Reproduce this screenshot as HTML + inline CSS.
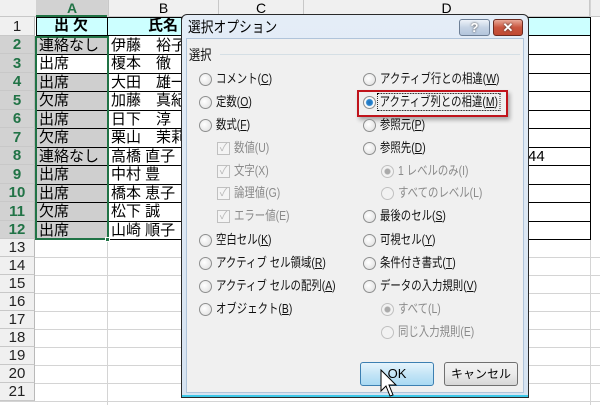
<!DOCTYPE html>
<html><head><meta charset="utf-8"><style>
*{margin:0;padding:0;box-sizing:border-box}
body{width:600px;height:405px;overflow:hidden;background:#fff;position:relative;font-family:"Liberation Sans","Noto Sans CJK JP",sans-serif}
.a{position:absolute}
.hl{position:absolute;left:0;width:600px;height:1px;background:#d4d4d4}
.vl{position:absolute;top:0;height:405px;width:1px;background:#d4d4d4}
.rh{position:absolute;left:0;width:35px;background:#f0f0f0;border-bottom:1px solid #c8c8c8;border-right:1px solid #b9b9b9;font-size:15px;text-align:center;color:#222}
.rh.s{background:#d2d2d2;color:#217346;font-weight:bold}
.c{position:absolute;font-size:15px;line-height:18px;color:#000;white-space:nowrap}
.t{position:absolute;font-size:13px;color:#111;white-space:nowrap;line-height:16px;transform:scaleX(0.8);transform-origin:0 0}
.t.g{color:#8a8a8a}
.r{position:absolute;width:13px;height:13px;border-radius:50%;border:1px solid #8e8f8f;background:radial-gradient(circle at 40% 40%,#fff,#dcdcdc)}
.r.g{border-color:#c0c0c0;background:#f2f2f2}
.k{position:absolute;width:13px;height:13px;border:1px solid #c0c0c0;background:#f4f4f4;color:#b8b8b8;font-size:11px;line-height:11px;text-align:center}
u{text-decoration:underline}
</style></head><body>
<div class="a" style="left:0;top:0;width:600px;height:17px;background:#f0f0f0;border-bottom:1px solid #c8c8c8"></div>
<div class="a" style="left:36px;top:0;width:72px;height:17px;background:#d2d2d2;border-bottom:2px solid #217346;color:#217346;font-size:14px;text-align:center;font-weight:bold">A</div>
<div class="a" style="left:108px;top:0;width:110px;height:17px;font-size:14px;text-align:center;border-left:1px solid #c8c8c8">B</div>
<div class="a" style="left:218px;top:0;width:85px;height:17px;font-size:14px;text-align:center;border-left:1px solid #c8c8c8">C</div>
<div class="a" style="left:303px;top:0;width:287px;height:17px;font-size:14px;text-align:center;border-left:1px solid #c8c8c8;border-right:1px solid #c8c8c8">D</div>
<div class="vl" style="left:107px"></div><div class="vl" style="left:590px"></div>
<div class="hl" style="top:257px"></div><div class="hl" style="top:275px"></div><div class="hl" style="top:293px"></div><div class="hl" style="top:311px"></div><div class="hl" style="top:329px"></div><div class="hl" style="top:347px"></div><div class="hl" style="top:365px"></div><div class="hl" style="top:383px"></div><div class="hl" style="top:401px"></div>
<div class="rh" style="top:17px;height:19px;line-height:19px">1</div>
<div class="rh s" style="top:36px;height:18px;line-height:18px">2</div>
<div class="rh s" style="top:54px;height:19px;line-height:19px">3</div>
<div class="rh s" style="top:73px;height:18px;line-height:18px">4</div>
<div class="rh s" style="top:91px;height:19px;line-height:19px">5</div>
<div class="rh s" style="top:110px;height:18px;line-height:18px">6</div>
<div class="rh s" style="top:128px;height:19px;line-height:19px">7</div>
<div class="rh s" style="top:147px;height:18px;line-height:18px">8</div>
<div class="rh s" style="top:165px;height:19px;line-height:19px">9</div>
<div class="rh s" style="top:184px;height:18px;line-height:18px">10</div>
<div class="rh s" style="top:202px;height:19px;line-height:19px">11</div>
<div class="rh s" style="top:221px;height:18px;line-height:18px">12</div>
<div class="rh" style="top:239px;height:18px;line-height:18px">13</div>
<div class="rh" style="top:257px;height:18px;line-height:18px">14</div>
<div class="rh" style="top:275px;height:18px;line-height:18px">15</div>
<div class="rh" style="top:293px;height:18px;line-height:18px">16</div>
<div class="rh" style="top:311px;height:18px;line-height:18px">17</div>
<div class="rh" style="top:329px;height:18px;line-height:18px">18</div>
<div class="rh" style="top:347px;height:18px;line-height:18px">19</div>
<div class="rh" style="top:365px;height:18px;line-height:18px">20</div>
<div class="rh" style="top:383px;height:18px;line-height:18px">21</div>
<div class="a" style="left:36px;top:17px;width:555px;height:19px;background:#ccffff;border:1px solid #000"></div>
<div class="a" style="left:36px;top:36px;width:72px;height:203px;background:#cfcfcf"></div>
<div class="a" style="left:36px;top:54px;width:72px;height:19px;background:#fff"></div>
<div class="a" style="left:107px;top:17px;width:1px;height:222px;background:#000"></div>
<div class="a" style="left:181px;top:17px;width:1px;height:222px;background:#000"></div>
<div class="a" style="left:590px;top:17px;width:1px;height:222px;background:#000"></div>
<div class="a" style="left:36px;top:54px;width:555px;height:1px;background:#000"></div>
<div class="a" style="left:36px;top:73px;width:555px;height:1px;background:#000"></div>
<div class="a" style="left:36px;top:91px;width:555px;height:1px;background:#000"></div>
<div class="a" style="left:36px;top:110px;width:555px;height:1px;background:#000"></div>
<div class="a" style="left:36px;top:128px;width:555px;height:1px;background:#000"></div>
<div class="a" style="left:36px;top:147px;width:555px;height:1px;background:#000"></div>
<div class="a" style="left:36px;top:165px;width:555px;height:1px;background:#000"></div>
<div class="a" style="left:36px;top:184px;width:555px;height:1px;background:#000"></div>
<div class="a" style="left:36px;top:202px;width:555px;height:1px;background:#000"></div>
<div class="a" style="left:36px;top:221px;width:555px;height:1px;background:#000"></div>
<div class="a" style="left:36px;top:239px;width:555px;height:1px;background:#000"></div>
<div class="a" style="left:35px;top:36px;width:74px;height:204px;border:2px solid #217346"></div>
<div class="a" style="left:105px;top:237px;width:5px;height:5px;background:#217346;border:1px solid #fff"></div>
<div class="c" style="left:54px;top:17px;font-weight:bold;letter-spacing:4px">出欠</div>
<div class="c" style="left:148px;top:17px;font-weight:bold">氏名</div>
<div class="c" style="left:39px;top:37px">連絡なし</div><div class="c" style="left:111px;top:37px">伊藤　裕子</div>
<div class="c" style="left:39px;top:55px">出席</div><div class="c" style="left:111px;top:55px">榎本　徹</div>
<div class="c" style="left:39px;top:74px">出席</div><div class="c" style="left:111px;top:74px">大田　雄一</div>
<div class="c" style="left:39px;top:92px">欠席</div><div class="c" style="left:111px;top:92px">加藤　真紀</div>
<div class="c" style="left:39px;top:111px">出席</div><div class="c" style="left:111px;top:111px">日下　淳</div>
<div class="c" style="left:39px;top:129px">欠席</div><div class="c" style="left:111px;top:129px">栗山　茉莉</div>
<div class="c" style="left:39px;top:148px">連絡なし</div><div class="c" style="left:111px;top:148px">高橋 直子</div>
<div class="c" style="left:39px;top:166px">出席</div><div class="c" style="left:111px;top:166px">中村 豊</div>
<div class="c" style="left:39px;top:185px">出席</div><div class="c" style="left:111px;top:185px">橋本 恵子</div>
<div class="c" style="left:39px;top:203px">欠席</div><div class="c" style="left:111px;top:203px">松下 誠</div>
<div class="c" style="left:39px;top:222px">出席</div><div class="c" style="left:111px;top:222px">山崎 順子</div>
<div class="c" style="left:513px;top:148px">市44</div>
<div class="a" style="left:181px;top:14px;width:348px;height:384px;border:1px solid #2a2a2a;border-radius:6px 6px 0 0;background:linear-gradient(#e4edf7,#d6e3f1);box-shadow:inset 0 -2px 0 #3cc8e8"></div>
<div class="t" style="left:188px;top:19px;font-size:15px;line-height:18px;color:#000;transform:scaleX(0.85)">選択オプション</div>
<div class="a" style="left:459px;top:19px;width:31px;height:17px;border:1px solid #6d7f96;border-radius:3px;background:linear-gradient(#eef3f9,#c5d3e4 50%,#b3c5dc);color:#fff;font-weight:bold;font-size:13px;text-align:center;line-height:15px;text-shadow:0 0 2px #333">?</div>
<div class="a" style="left:493px;top:19px;width:30px;height:17px;border:1px solid #6b2a20;border-radius:3px;background:linear-gradient(#e9a999,#c9553f 50%,#c04a33);color:#fff;font-weight:bold;font-size:13px;text-align:center;line-height:15px;text-shadow:0 0 2px #333">✕</div>
<div class="a" style="left:186px;top:38px;width:338px;height:355px;background:#f0f0f0;border:1px solid #b0c4da"></div>
<div class="t" style="left:189px;top:47px;font-size:14px">選択</div>
<div class="a" style="left:220px;top:54px;width:300px;height:1px;background:#d5dfe5"></div>
<div class="r" style="left:199px;top:73px"></div><div class="t" style="left:216px;top:71px">コメント(<u>C</u>)</div>
<div class="r" style="left:199px;top:96px"></div><div class="t" style="left:216px;top:94px">定数(<u>O</u>)</div>
<div class="r" style="left:199px;top:119px"></div><div class="t" style="left:216px;top:117px">数式(<u>F</u>)</div>
<div class="k" style="left:217px;top:142px">✓</div><div class="t g" style="left:234px;top:140px">数値(U)</div>
<div class="k" style="left:217px;top:165px">✓</div><div class="t g" style="left:234px;top:163px">文字(X)</div>
<div class="k" style="left:217px;top:187px">✓</div><div class="t g" style="left:234px;top:185px">論理値(G)</div>
<div class="k" style="left:217px;top:210px">✓</div><div class="t g" style="left:234px;top:208px">エラー値(E)</div>
<div class="r" style="left:199px;top:234px"></div><div class="t" style="left:216px;top:232px">空白セル(<u>K</u>)</div>
<div class="r" style="left:199px;top:257px"></div><div class="t" style="left:216px;top:255px">アクティブ セル領域(<u>R</u>)</div>
<div class="r" style="left:199px;top:280px"></div><div class="t" style="left:216px;top:278px">アクティブ セルの配列(<u>A</u>)</div>
<div class="r" style="left:199px;top:303px"></div><div class="t" style="left:216px;top:301px">オブジェクト(<u>B</u>)</div>
<div class="r" style="left:363px;top:73px"></div><div class="t" style="left:380px;top:71px">アクティブ行との相違(<u>W</u>)</div>
<div class="a" style="left:357px;top:90px;width:151px;height:27px;border:2px solid #c0141c;box-shadow:2px 3px 4px rgba(0,0,0,.3)"></div>
<div class="r" style="left:363px;top:96px;background:radial-gradient(circle,#1f6fb8 0,#2a86d0 3px,#fff 4px,#e0e0e0)"></div>
<div class="t" style="left:378px;top:94px;outline:1px dotted #000;padding:0 2px">アクティブ列との相違(<u>M</u>)</div>
<div class="r" style="left:363px;top:119px"></div><div class="t" style="left:380px;top:117px">参照元(<u>P</u>)</div>
<div class="r" style="left:363px;top:142px"></div><div class="t" style="left:380px;top:140px">参照先(<u>D</u>)</div>
<div class="r g" style="left:381px;top:165px;background:radial-gradient(circle,#aaa 0,#aaa 2.5px,#f2f2f2 3.5px)"></div><div class="t g" style="left:398px;top:163px">1 レベルのみ(I)</div>
<div class="r g" style="left:381px;top:187px"></div><div class="t g" style="left:398px;top:185px">すべてのレベル(L)</div>
<div class="r" style="left:363px;top:210px"></div><div class="t" style="left:380px;top:208px">最後のセル(<u>S</u>)</div>
<div class="r" style="left:363px;top:234px"></div><div class="t" style="left:380px;top:232px">可視セル(<u>Y</u>)</div>
<div class="r" style="left:363px;top:257px"></div><div class="t" style="left:380px;top:255px">条件付き書式(<u>T</u>)</div>
<div class="r" style="left:363px;top:280px"></div><div class="t" style="left:380px;top:278px">データの入力規則(<u>V</u>)</div>
<div class="r g" style="left:381px;top:303px;background:radial-gradient(circle,#aaa 0,#aaa 2.5px,#f2f2f2 3.5px)"></div><div class="t g" style="left:398px;top:301px">すべて(L)</div>
<div class="r g" style="left:381px;top:326px"></div><div class="t g" style="left:398px;top:324px">同じ入力規則(E)</div>
<div class="a" style="left:360px;top:362px;width:74px;height:24px;border:1px solid #3c7fb1;border-radius:3px;background:linear-gradient(#e5f4fc,#c4e5f6 50%,#a9daf3);font-size:13px;text-align:center;line-height:22px">OK</div>
<div class="a" style="left:444px;top:362px;width:74px;height:24px;border:1px solid #707070;border-radius:3px;background:linear-gradient(#f2f2f2,#ebebeb 50%,#d6d6d6);font-size:12px;text-align:center;line-height:22px">キャンセル</div>
<svg class="a" style="left:380px;top:369px" width="18" height="30" viewBox="0 0 18 30"><path d="M1 1 L1 22 L6 17 L10 27 L13 26 L9 16 L16 16 Z" fill="#fff" stroke="#000" stroke-width="1"/></svg>
</body></html>
